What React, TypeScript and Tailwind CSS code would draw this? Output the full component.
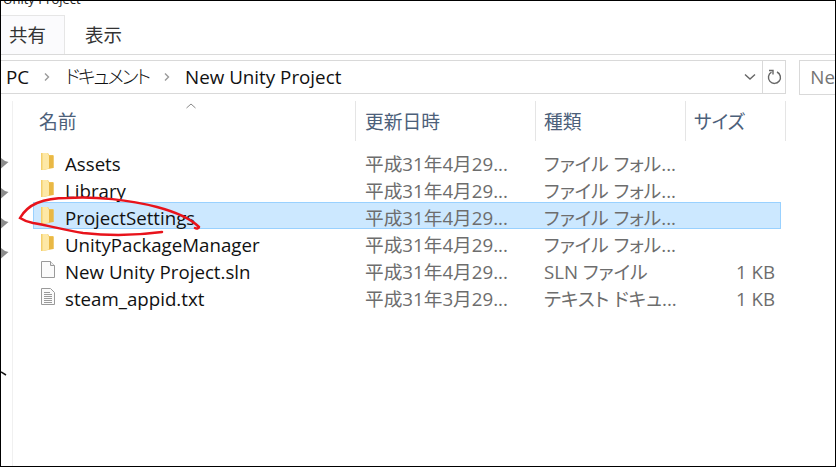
import React from 'react';

const latin = "font-['Open_Sans','Noto_Sans_CJK_JP',sans-serif] [font-feature-settings:'palt']";

const FolderIcon = () => (
    <svg width="13" height="17" viewBox="0 0 13 17" className="shrink-0">
        <path d="M0 0h7l1 2h4.500v13L2 17H0z" fill="#efc251" />
        <path d="M0 0h6.500l1.500 3v12.500L2 17H0z" fill="#fde8a6" />
        <path d="M0 0h1.500v17H0z" fill="#f3cf6c" />
        <path d="M8 3h4.500v12H8z" fill="#e9b845" />
    </svg>
);

const BlankIcon = () => (
    <svg width="14" height="17" viewBox="0 0 14 17" className="shrink-0 -mr-px">
        <path d="M.5.500h9l4 4v12H.500z" fill="#fbfbfb" stroke="#9a9a9a" />
        <path d="M9.500.500v4h4" fill="#eee" stroke="#9a9a9a" />
    </svg>
);

const TextIcon = () => (
    <svg width="14" height="17" viewBox="0 0 14 17" className="shrink-0 -mr-px">
        <path d="M.5.500h9l4 4v12H.500z" fill="#fbfbfb" stroke="#9a9a9a" />
        <path d="M3 4.500h6M3 6.500h8M3 8.500h8M3 10.500h8M3 12.500h8M3 14.500h8" stroke="#9a9a9a" />
    </svg>
);

const rows = [
    { name: 'Assets', date: '平成31年4月29...', type: 'ファイル フォル...', size: '', icon: 'folder' },
    { name: 'Library', date: '平成31年4月29...', type: 'ファイル フォル...', size: '', icon: 'folder' },
    { name: 'ProjectSettings', date: '平成31年4月29...', type: 'ファイル フォル...', size: '', icon: 'folder', selected: true },
    { name: 'UnityPackageManager', date: '平成31年4月29...', type: 'ファイル フォル...', size: '', icon: 'folder' },
    { name: 'New Unity Project.sln', date: '平成31年4月29...', type: 'SLN ファイル', size: '1 KB', icon: 'blank' },
    { name: 'steam_appid.txt', date: '平成31年3月29...', type: 'テキスト ドキュ...', size: '1 KB', icon: 'text' },
];

const PinIcon = () => (
    <svg width="8" height="12" viewBox="0 0 8 12">
        <path d="M0 1l4 3 3.500 1L4 8l-4 3.500z" fill="#8c8c8c" />
    </svg>
);

const Chevron = () => (
    <svg width="8" height="12" viewBox="0 0 8 12" className="mx-[14px]">
        <path d="M2 2.500L5.500 6 2 9.500" fill="none" stroke="#9a9a9a" strokeWidth="1.400" />
    </svg>
);

export default function App() {
    return (
        <div className={`relative w-[836px] h-[467px] overflow-hidden bg-white border border-black flex flex-col ${latin}`}>
            <div className="h-[14px] -mt-[9px] pl-[2px] text-[13px] leading-[14px] text-[#222] shrink-0">Unity Project</div>

            <div className="h-[40px] mt-[9px] flex border-b border-[#dadada] text-[18.500px] text-[#333] shrink-0">
                <div className="w-[64px] h-[39px] pl-[8px] flex items-center bg-[#fbfbfd] border-t border-r border-[#e6e6e6]">共有</div>
                <div className="ml-[20px] h-[39px] flex items-center">表示</div>
            </div>

            <div className="h-[35px] mt-[5px] flex shrink-0">
                <div className="w-[789px] h-[34px] flex items-center border-y border-r border-[#d9d9d9] pl-[5px] text-[18.800px] text-[#111]">
                    <span>PC</span>
                    <Chevron />
                    <span className="tracking-[-2px] font-light">ドキュメント</span>
                    <Chevron />
                    <span>New Unity Project</span>
                    <svg width="12" height="8" viewBox="0 0 12 8" className="ml-auto mr-[6px]">
                        <path d="M1 1.500L6 6l5-4.500" fill="none" stroke="#666" strokeWidth="1.400" />
                    </svg>
                    <div className="w-[23px] h-full flex items-center justify-center border-l border-[#d9d9d9]">
                        <svg width="15" height="16" viewBox="0 0 15 16">
                            <path d="M4.500 3.200A6 6 0 1 0 10 3" fill="none" stroke="#666" strokeWidth="1.400" />
                            <path d="M2 1.500h4v4" fill="none" stroke="#666" strokeWidth="1.400" />
                        </svg>
                    </div>
                </div>
                <div className="ml-[13px] flex-1 h-[35px] flex items-center border border-r-0 border-[#d9d9d9] pl-[10px] text-[18.800px] text-[#757575]">Ne</div>
            </div>

            <div className="flex-1 flex min-h-0 mt-[6px]">
                <div className="w-[12px] border-r border-[#f0f0f0] shrink-0 flex flex-col items-start pt-[56px] gap-[18px]">
                    <PinIcon />
                    <PinIcon />
                    <PinIcon />
                    <PinIcon />
                </div>

                <div className="flex-1 relative">
                    <div className="h-[40px] flex text-[18.800px] text-[#4c607a]">
                        <div className="w-[343px] pl-[26px] pt-[2px] flex items-center border-r border-[#e5e5e5]">名前</div>
                        <div className="w-[180px] pl-[9px] pt-[2px] flex items-center border-r border-[#e5e5e5]">更新日時</div>
                        <div className="w-[150px] pl-[8px] pt-[2px] flex items-center border-r border-[#e5e5e5]">種類</div>
                        <div className="w-[100px] pl-[8px] pt-[2px] flex items-center border-r border-[#e5e5e5]">サイズ</div>
                    </div>
                    <svg width="10" height="6" viewBox="0 0 10 6" className="absolute left-[173px] top-[2px]">
                        <path d="M.5 5L5 1l4.500 4" fill="none" stroke="#888" />
                    </svg>

                    <div className="mt-[7px] ml-[20px] w-[748px] flex flex-col text-[18.700px]">
                        {rows.map((r) => (
                            <div
                                key={r.name}
                                className={`h-[27px] flex items-center border ${r.selected ? 'bg-[#cce8ff] border-[#99d1ff]' : 'border-transparent'}`}
                            >
                                <div className="w-[331px] pl-[7px] flex items-center gap-[11px] text-[#111] whitespace-nowrap">
                                    {r.icon === 'folder' && <FolderIcon />}
                                    {r.icon === 'blank' && <BlankIcon />}
                                    {r.icon === 'text' && <TextIcon />}
                                    <span className="pt-[6px]">{r.name}</span>
                                </div>
                                <div className="w-[179px] pt-[6px] text-[#6d6d6d] whitespace-nowrap">{r.date}</div>
                                <div className="w-[180px] pt-[6px] text-[#6d6d6d] whitespace-nowrap">{r.type}</div>
                                <div className="w-[51px] pt-[6px] text-right text-[#6d6d6d] whitespace-nowrap">{r.size}</div>
                            </div>
                        ))}
                    </div>
                </div>
            </div>

            <svg width="836" height="467" viewBox="0 0 836 467" className="absolute -left-px -top-px pointer-events-none">
                <path
                    d="M162 232C140 235 110 236 83 233C65 230 50 226 33 223C28 222 23 220 20 218C24 211 30 206 37 203C47 199 57 198 67 198C95 196 130 200 157 207C172 211 190 218 199 227C199 228 197 229 195 228"
                    fill="none"
                    stroke="#e8131b"
                    strokeWidth="2.500"
                    strokeLinecap="round"
                />
                <path d="M1 372l5 3" stroke="#111" strokeWidth="1.500" />
            </svg>
        </div>
    );
}
